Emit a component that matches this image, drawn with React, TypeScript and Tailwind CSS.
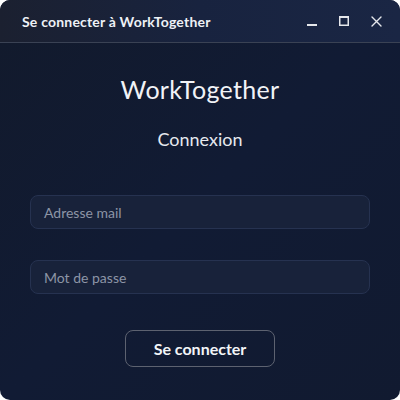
import React from "react";

export default function App() {
  return (
    <div className="w-[400px] h-[400px] bg-white" style={{ fontFamily: "Lato, 'Noto Sans', sans-serif" }}>
      <div className="w-full h-full rounded-[10px] overflow-hidden flex flex-col bg-gradient-to-br from-[#121a2c] via-[#111b34] to-[#111a30]">
        <div className="h-[43px] shrink-0 flex items-center pl-[22px] pr-[18px] border-b border-[#3a4254] bg-gradient-to-r from-[#1b2030] via-[#18233f] to-[#1a2644]">
          <span className="text-[14px] font-bold text-[#eef1f6] tracking-[0.2px]">Se connecter à WorkTogether</span>
          <div className="ml-auto flex items-center gap-[22px]">
            <svg width="10" height="10" viewBox="0 0 10 10"><rect x="0" y="8" width="10" height="2" fill="#e5e7eb" /></svg>
            <svg width="10" height="10" viewBox="0 0 10 10"><rect x="0.75" y="0.75" width="8.5" height="8.5" fill="none" stroke="#e5e7eb" strokeWidth="1.5" /><rect x="0" y="0" width="10" height="2" fill="#e5e7eb" /></svg>
            <svg width="11" height="11" viewBox="0 0 11 11"><path d="M1 1L10 10M10 1L1 10" stroke="#e5e7eb" strokeWidth="1.4" strokeLinecap="round" /></svg>
          </div>
        </div>
        <div className="flex-1 flex flex-col items-center px-[30px]">
          <div className="mt-[31px] text-[25px] text-[#f1f3f7] leading-[30px] tracking-[0.3px]">WorkTogether</div>
          <div className="mt-[23px] text-[18px] text-[#e6e9ef] leading-[24px]">Connexion</div>
          <div className="mt-[44px] w-full h-[34px] rounded-[8px] border border-[#263250] bg-[#18223a] flex items-center pl-[13px] text-[14px] text-[#8d95a6]">Adresse mail</div>
          <div className="mt-[31px] w-full h-[34px] rounded-[8px] border border-[#263250] bg-[#18223a] flex items-center pl-[13px] text-[14px] text-[#8d95a6]">Mot de passe</div>
          <div className="mt-[36px] w-[150px] h-[37px] rounded-[8px] border border-[#5d6270] flex items-center justify-center text-[16px] font-bold text-[#f3f5f8]">Se connecter</div>
        </div>
      </div>
    </div>
  );
}
